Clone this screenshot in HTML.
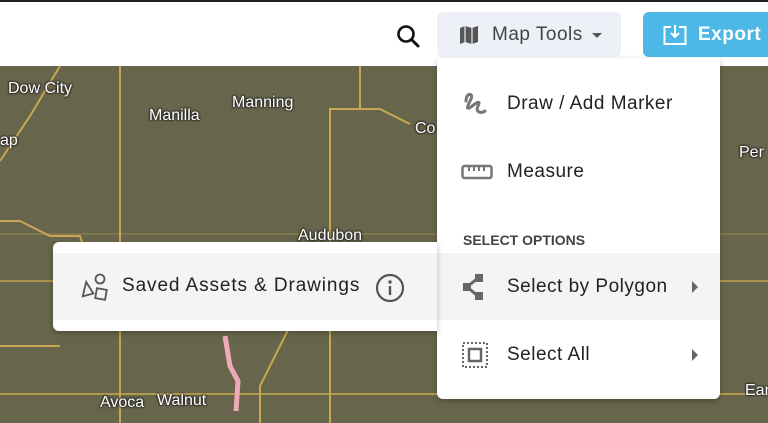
<!DOCTYPE html>
<html><head><style>
*{margin:0;padding:0;box-sizing:border-box}
html,body{width:768px;height:423px;overflow:hidden}
body{position:relative;font-family:"Liberation Sans",sans-serif;background:#6c6a4f}
.map{position:absolute;left:0;top:66px;width:768px;height:357px;background:#67654b;overflow:hidden}
.lbl{position:absolute;color:#fff;font-size:16px;text-shadow:0 0 2px #222,0 0 2px #222,0 0 2px #222}
.top{position:absolute;left:0;top:0;width:768px;height:66px;background:#fff;border-top:2px solid #222}
.btn{position:absolute;top:12px;height:45px;border-radius:6px;font-size:19px;display:flex;align-items:center}
.menu{position:absolute;left:437px;top:58px;width:283px;height:341px;background:#fff;border-radius:0 0 6px 6px;box-shadow:0 2px 6px rgba(0,0,0,.25)}
.item{position:absolute;left:0;width:283px;height:67px;display:flex;align-items:center;font-size:19px;color:#222;letter-spacing:.5px}
.item svg{position:absolute;left:24px}
.item span{position:absolute;left:70px}
.arr{position:absolute;right:22px;width:0;height:0;border-left:6px solid #666;border-top:6px solid transparent;border-bottom:6px solid transparent}
.panel{position:absolute;left:53px;top:242px;width:384px;height:89px;background:#fff;border-radius:6px 0 0 6px;box-shadow:0 2px 6px rgba(0,0,0,.25)}
</style></head><body>
<div class="map">
<svg width="768" height="357" style="position:absolute;left:0;top:0">
<g fill="none" stroke="#c8a750" stroke-width="2">
<path d="M120 0 V357"/><path d="M330 110 V357"/>
<path d="M0 155 H20 L50 170 H80 L85 185 H120"/><path d="M0 95 L30 50 L60 0"/>
<path d="M0 215 H768" opacity=".7"/><path d="M0 168 H768" stroke-width="1" opacity=".5"/>
<path d="M330 110 V43 H380 L410 58"/><path d="M360 43 V0"/><path d="M0 280 H60"/>
<path d="M0 328 H768" opacity=".8"/><path d="M290 260 L260 320 V357"/>
</g>
<path d="M225 270 L230 300 L238 315 L236 345" stroke="#eab" stroke-width="5" fill="none"/>
</svg>
<div class="lbl" style="left:8px;top:14px">Dow City</div>
<div class="lbl" style="left:149px;top:41px">Manilla</div>
<div class="lbl" style="left:232px;top:28px">Manning</div>
<div class="lbl" style="left:415px;top:54px">Co</div>
<div class="lbl" style="left:0;top:66px">ap</div>
<div class="lbl" style="left:739px;top:78px">Per</div>
<div class="lbl" style="left:298px;top:161px">Audubon</div>
<div class="lbl" style="left:100px;top:328px">Avoca</div>
<div class="lbl" style="left:157px;top:326px">Walnut</div>
<div class="lbl" style="left:745px;top:316px">Earlha</div>
</div>
<div class="top"></div>
<svg style="position:absolute;left:396px;top:24px" width="26" height="26" viewBox="0 0 26 26"><circle cx="10" cy="10" r="7.5" fill="none" stroke="#111" stroke-width="2.6"/><path d="M15.5 15.5 L22 22" stroke="#111" stroke-width="3" stroke-linecap="round"/></svg>
<div class="btn" style="left:437px;width:184px;background:#edf1f7;color:#444">
<svg style="position:absolute;left:22px" width="20" height="20" viewBox="0 0 20 20"><path d="M1 3 L6 1 L13 3 L19 1 V17 L13 19 L6 17 L1 19Z" fill="#555"/><path d="M6 1 V17 M13 3 V19" stroke="#edf1f7" stroke-width="1.2"/></svg>
<span style="position:absolute;left:55px;letter-spacing:.5px">Map Tools</span>
<div style="position:absolute;left:155px;top:21px;border-top:5px solid #555;border-left:5px solid transparent;border-right:5px solid transparent"></div>
</div>
<div class="btn" style="left:643px;width:140px;background:#4db8e6;color:#fff;font-weight:bold">
<svg style="position:absolute;left:20px" width="24" height="22" viewBox="0 0 24 22"><rect x="1.5" y="3" width="21" height="17" fill="none" stroke="#fff" stroke-width="2"/><path d="M8 3 H16" stroke="#4db8e6" stroke-width="3"/><path d="M12 1 V13 M8 9 L12 13 L16 9" stroke="#fff" stroke-width="2" fill="none"/></svg>
<span style="position:absolute;left:55px;letter-spacing:.5px">Export</span>
</div>
<div class="menu">
<div class="item" style="top:12px"><svg width="30" height="30" viewBox="0 0 30 30"><path d="M5 12 C5 3 13 4 10 10 C7 16 4 22 10 18 C16 13 20 11 17 17 C14 23 20 25 24 22" fill="none" stroke="#777" stroke-width="3" stroke-linecap="round"/></svg><span>Draw / Add Marker</span></div>
<div class="item" style="top:80px"><svg width="32" height="20" viewBox="0 0 32 20"><rect x="1.5" y="4" width="29" height="12" rx="2" fill="none" stroke="#777" stroke-width="2.5"/><path d="M8 4V9 M13 4V9 M18 4V9 M23 4V9" stroke="#777" stroke-width="2"/></svg><span>Measure</span></div>
<div style="position:absolute;left:26px;top:174px;font-size:14px;font-weight:bold;color:#444">SELECT OPTIONS</div>
<div class="item" style="top:195px;background:#f4f4f4"><svg width="28" height="28" viewBox="0 0 28 28"><path d="M17 5 L6 14 L17 23" stroke="#666" stroke-width="3" fill="none"/><rect x="14" y="1" width="8" height="8" fill="#666"/><rect x="2" y="10" width="8" height="8" fill="#666"/><rect x="14" y="19" width="8" height="8" fill="#666"/></svg><span>Select by Polygon</span><div class="arr"></div></div>
<div class="item" style="top:263px"><svg width="28" height="28" viewBox="0 0 28 28"><rect x="2" y="2" width="24" height="24" fill="none" stroke="#666" stroke-width="2" stroke-dasharray="2 2"/><rect x="8" y="8" width="12" height="12" fill="none" stroke="#666" stroke-width="2.5"/></svg><span>Select All</span><div class="arr"></div></div>
</div>
<div class="panel">
<div style="position:absolute;left:0;top:11px;width:384px;height:67px;background:#f4f4f4"></div>
<svg style="position:absolute;left:26px;top:31px" width="32" height="30" viewBox="0 0 32 30"><circle cx="21" cy="6" r="4.5" fill="none" stroke="#555" stroke-width="1.8"/><path d="M9 9 L2 22 L13 22Z" fill="none" stroke="#555" stroke-width="1.8" transform="rotate(-15 8 16)"/><rect x="17" y="16" width="10" height="10" fill="none" stroke="#555" stroke-width="1.8" transform="rotate(10 22 21)"/></svg>
<span style="position:absolute;left:69px;top:33px;font-size:19px;color:#222;letter-spacing:.9px">Saved Assets &amp; Drawings</span>
<svg style="position:absolute;left:322px;top:31px" width="30" height="30" viewBox="0 0 30 30"><circle cx="15" cy="15" r="13" fill="none" stroke="#555" stroke-width="2.2"/><circle cx="15" cy="9" r="1.7" fill="#555"/><path d="M15 13 V22" stroke="#555" stroke-width="2.4"/></svg>
</div>
</body></html>
